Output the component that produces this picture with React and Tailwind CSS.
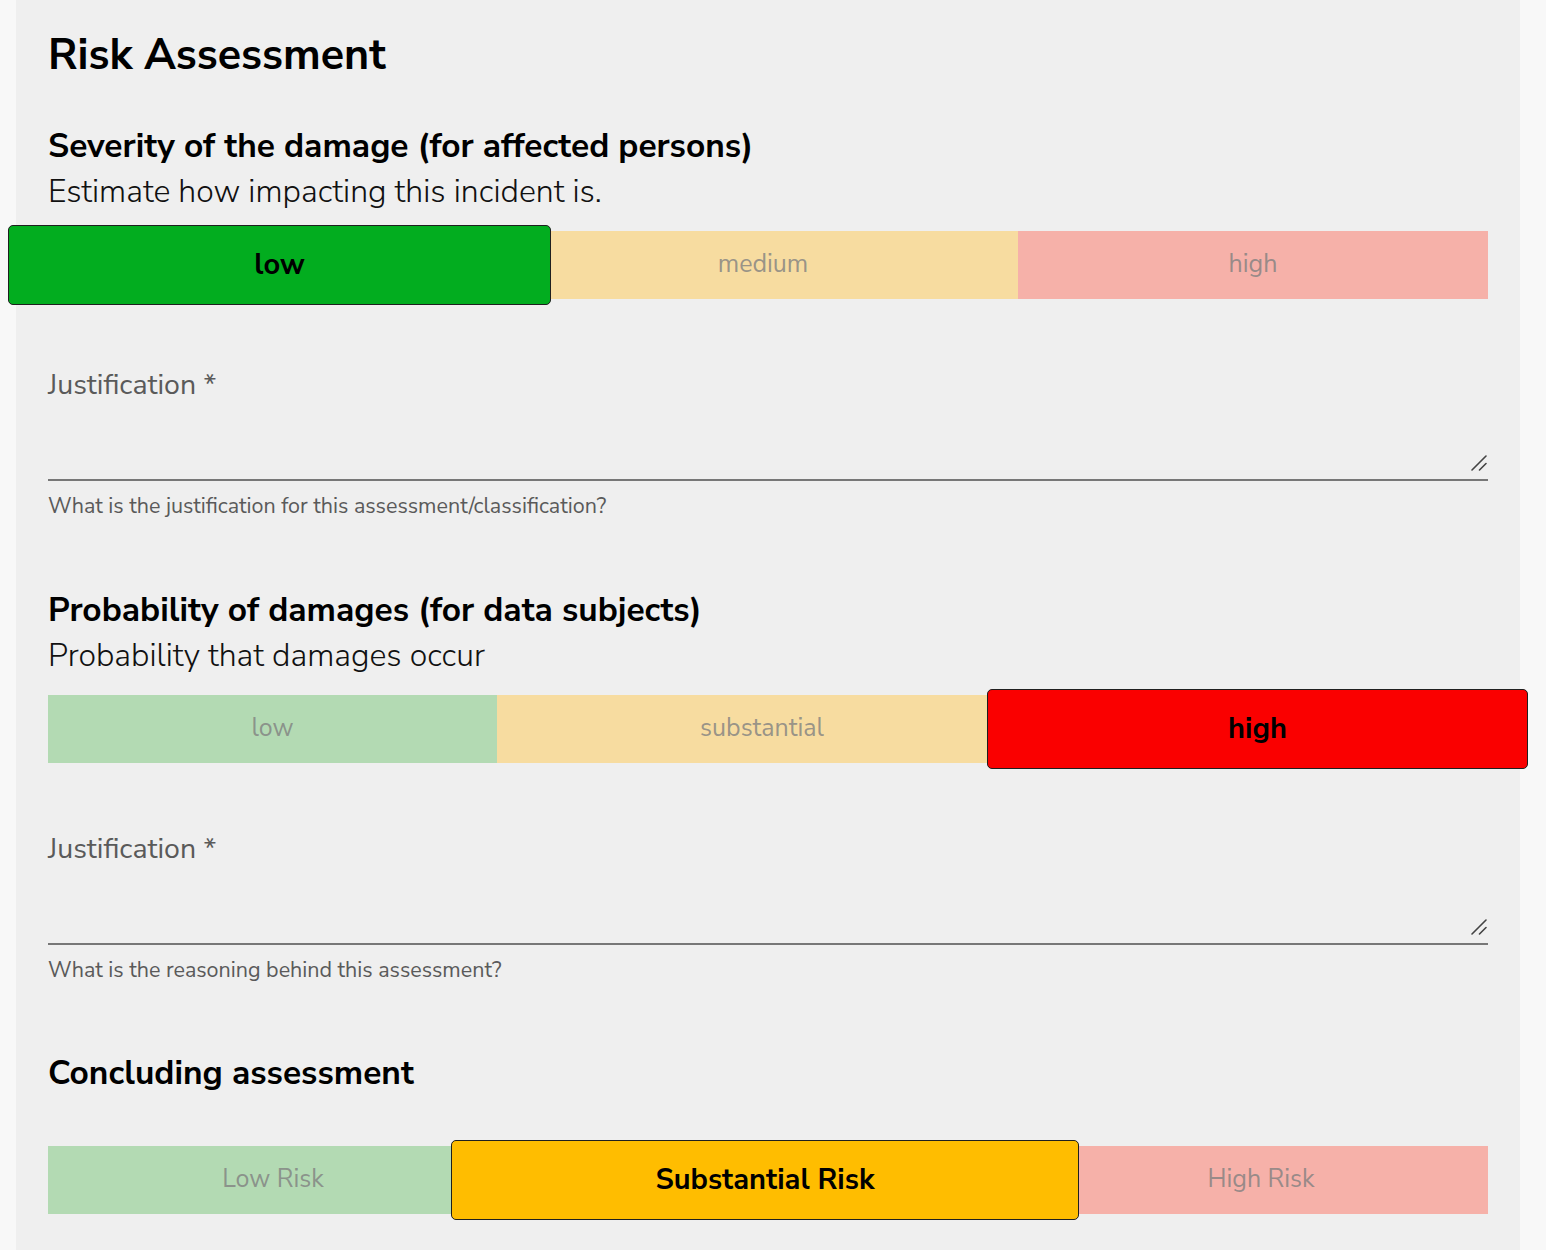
const font = { fontFamily: '"Nunito Sans", Lato, "Noto Sans", sans-serif' };

// pad shifts the label to where the segment's centre would be if it ran under the selected one
const severity = [
  { label: 'low', width: 'w-[543px]', bg: 'bg-[#02ad1f]', selected: true },
  { label: 'medium', width: 'w-[467px]', light: 'bg-[#f7dca0]', pad: 'pr-[43px]' },
  { label: 'high', width: 'w-[470px]', light: 'bg-[#f6b1a9]' },
];

const probability = [
  { label: 'low', width: 'w-[449px]', light: 'bg-[#b3dab3]' },
  { label: 'substantial', width: 'w-[490px]', light: 'bg-[#f7dca0]', pad: 'pl-[40px]' },
  { label: 'high', width: 'w-[541px]', bg: 'bg-[#fa0000]', selected: true },
];

const concluding = [
  { label: 'Low Risk', width: 'w-[403px]', light: 'bg-[#b3dab3]', pad: 'pl-[47px]' },
  { label: 'Substantial Risk', width: 'w-[628px]', bg: 'bg-[#ffbd00]', selected: true },
  { label: 'High Risk', width: 'w-[409px]', light: 'bg-[#f6b1a9]', pad: 'pr-[45px]' },
];

function Segments({ items, className }) {
  return (
    <div className={`flex items-center h-[80px] ${className || ''}`}>
      {items.map((it) =>
        it.selected ? (
          <button
            key={it.label}
            className={`${it.width} ${it.bg} h-[80px] shrink-0 rounded-[5px] border border-[#1f1f1f] text-[29px] font-bold text-black`}
          >
            {it.label}
          </button>
        ) : (
          <button
            key={it.label}
            className={`${it.width} ${it.light} ${it.pad || ''} h-[68px] shrink-0 text-[25px] text-[#808080]/80`}
          >
            {it.label}
          </button>
        )
      )}
    </div>
  );
}

function Justification({ hint }) {
  return (
    <div className="mt-[62px]">
      <label className="block text-[28.5px] leading-[36px] text-[#5a5a5a]">Justification *</label>
      <div className="relative mt-[6px]">
        <textarea
          className="block w-full h-[72px] bg-transparent border-0 border-b-2 border-[#777] outline-none resize-none"
          aria-label="Justification"
        />
        <svg className="absolute right-[1px] bottom-[10px] w-[16px] h-[16px]" viewBox="0 0 16 16" fill="none">
          <path d="M1 15 L15 1 M8.5 15 L15 8.5" stroke="#444" strokeWidth="1.6" strokeLinecap="round" />
        </svg>
      </div>
      <p className="mt-[12px] text-[21.5px] leading-[26px] text-[#5a5a5a]">{hint}</p>
    </div>
  );
}

export default function App() {
  return (
    <div className="min-h-[1250px] bg-[#f8f8f8] pl-[16px] pr-[26px]" style={font}>
      <div className="min-h-[1250px] bg-[#efefef] px-[32px] pt-[30px]">
        <h1 className="text-[43px] leading-[50px] font-bold text-black">Risk Assessment</h1>

        <h2 className="mt-[46px] text-[33.5px] leading-[40px] font-bold text-black">
          Severity of the damage (for affected persons)
        </h2>
        <p className="mt-[6px] text-[32px] leading-[40px] font-light text-[#111]">
          Estimate how impacting this incident is.
        </p>
        <Segments items={severity} className="mt-[13px] -ml-[40px]" />
        <Justification hint="What is the justification for this assessment/classification?" />

        <h2 className="mt-[71px] text-[33.5px] leading-[40px] font-bold text-black">
          Probability of damages (for data subjects)
        </h2>
        <p className="mt-[6px] text-[32px] leading-[40px] font-light text-[#111]">Probability that damages occur</p>
        <Segments items={probability} className="mt-[13px]" />
        <Justification hint="What is the reasoning behind this assessment?" />

        <h2 className="mt-[70px] text-[33.5px] leading-[40px] font-bold text-black">Concluding assessment</h2>
        <Segments items={concluding} className="mt-[47px]" />
      </div>
    </div>
  );
}
